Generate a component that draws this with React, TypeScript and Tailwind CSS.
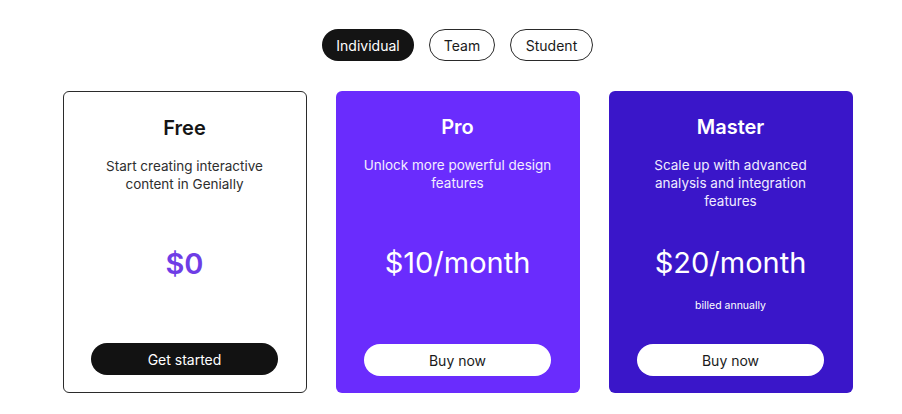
const TABS = [
  { id: "individual", label: "Individual", width: "w-[92px]" },
  { id: "team", label: "Team", width: "w-[66px]" },
  { id: "student", label: "Student", width: "w-[83px]" },
];

const PLANS = [
  {
    name: "Free",
    desc: "Start creating interactive content in Genially",
    price: "$0",
    note: "",
    cta: "Get started",
    card: "bg-white border border-[#2b2b2b] text-[#151515]",
    descColor: "text-[#2e2e2e]",
    priceColor: "text-[#6e3de6] font-semibold",
    button: "bg-[#121212] text-white",
  },
  {
    name: "Pro",
    desc: "Unlock more powerful design features",
    price: "$10/month",
    note: "",
    cta: "Buy now",
    card: "bg-[#6a2cfd] text-white",
    descColor: "text-[#f3eeff]",
    priceColor: "text-white font-normal",
    button: "bg-white text-[#1a1a1a]",
  },
  {
    name: "Master",
    desc: "Scale up with advanced analysis and integration features",
    price: "$20/month",
    note: "billed annually",
    cta: "Buy now",
    card: "bg-[#3a16c9] text-white",
    descColor: "text-[#f0ecff]",
    priceColor: "text-white font-normal",
    button: "bg-white text-[#1a1a1a]",
  },
];

export default function App() {
  return (
    <div className="w-[902px] h-[414px] bg-white font-['Inter',sans-serif] flex flex-col items-center pl-[13px] pt-[29px]">
      {/* plan type switch */}
      <div className="flex items-center gap-[15px]">
        {TABS.map((tab, i) => (
          <button
            key={tab.id}
            className={`${tab.width} h-[32px] rounded-full text-[14px] flex items-center justify-center ${
              i === 0 ? "bg-[#141414] text-white" : "border border-[#2a2a2a] text-[#1a1a1a] bg-white"
            }`}
          >
            {tab.label}
          </button>
        ))}
      </div>

      {/* plans */}
      <div className="mt-[30px] flex gap-[29px]">
        {PLANS.map((plan) => (
          <div
            key={plan.name}
            className={`w-[244px] h-[302px] rounded-[6px] flex flex-col items-center pt-[22px] pb-[17px] ${plan.card}`}
          >
            <h2 className="text-[20px] leading-[28px] font-semibold">{plan.name}</h2>
            <p className={`mt-[15px] h-[54px] px-[28px] text-center text-[13.5px] leading-[18px] ${plan.descColor}`}>
              {plan.desc}
            </p>
            <div className={`mt-[35px] text-[29px] leading-[36px] ${plan.priceColor}`}>{plan.price}</div>
            {plan.note && <div className="mt-[18px] text-[10.5px] leading-[14px]">{plan.note}</div>}
            <button className={`mt-auto w-[187px] h-[32px] rounded-full text-[14px] ${plan.button}`}>
              {plan.cta}
            </button>
          </div>
        ))}
      </div>
    </div>
  );
}
